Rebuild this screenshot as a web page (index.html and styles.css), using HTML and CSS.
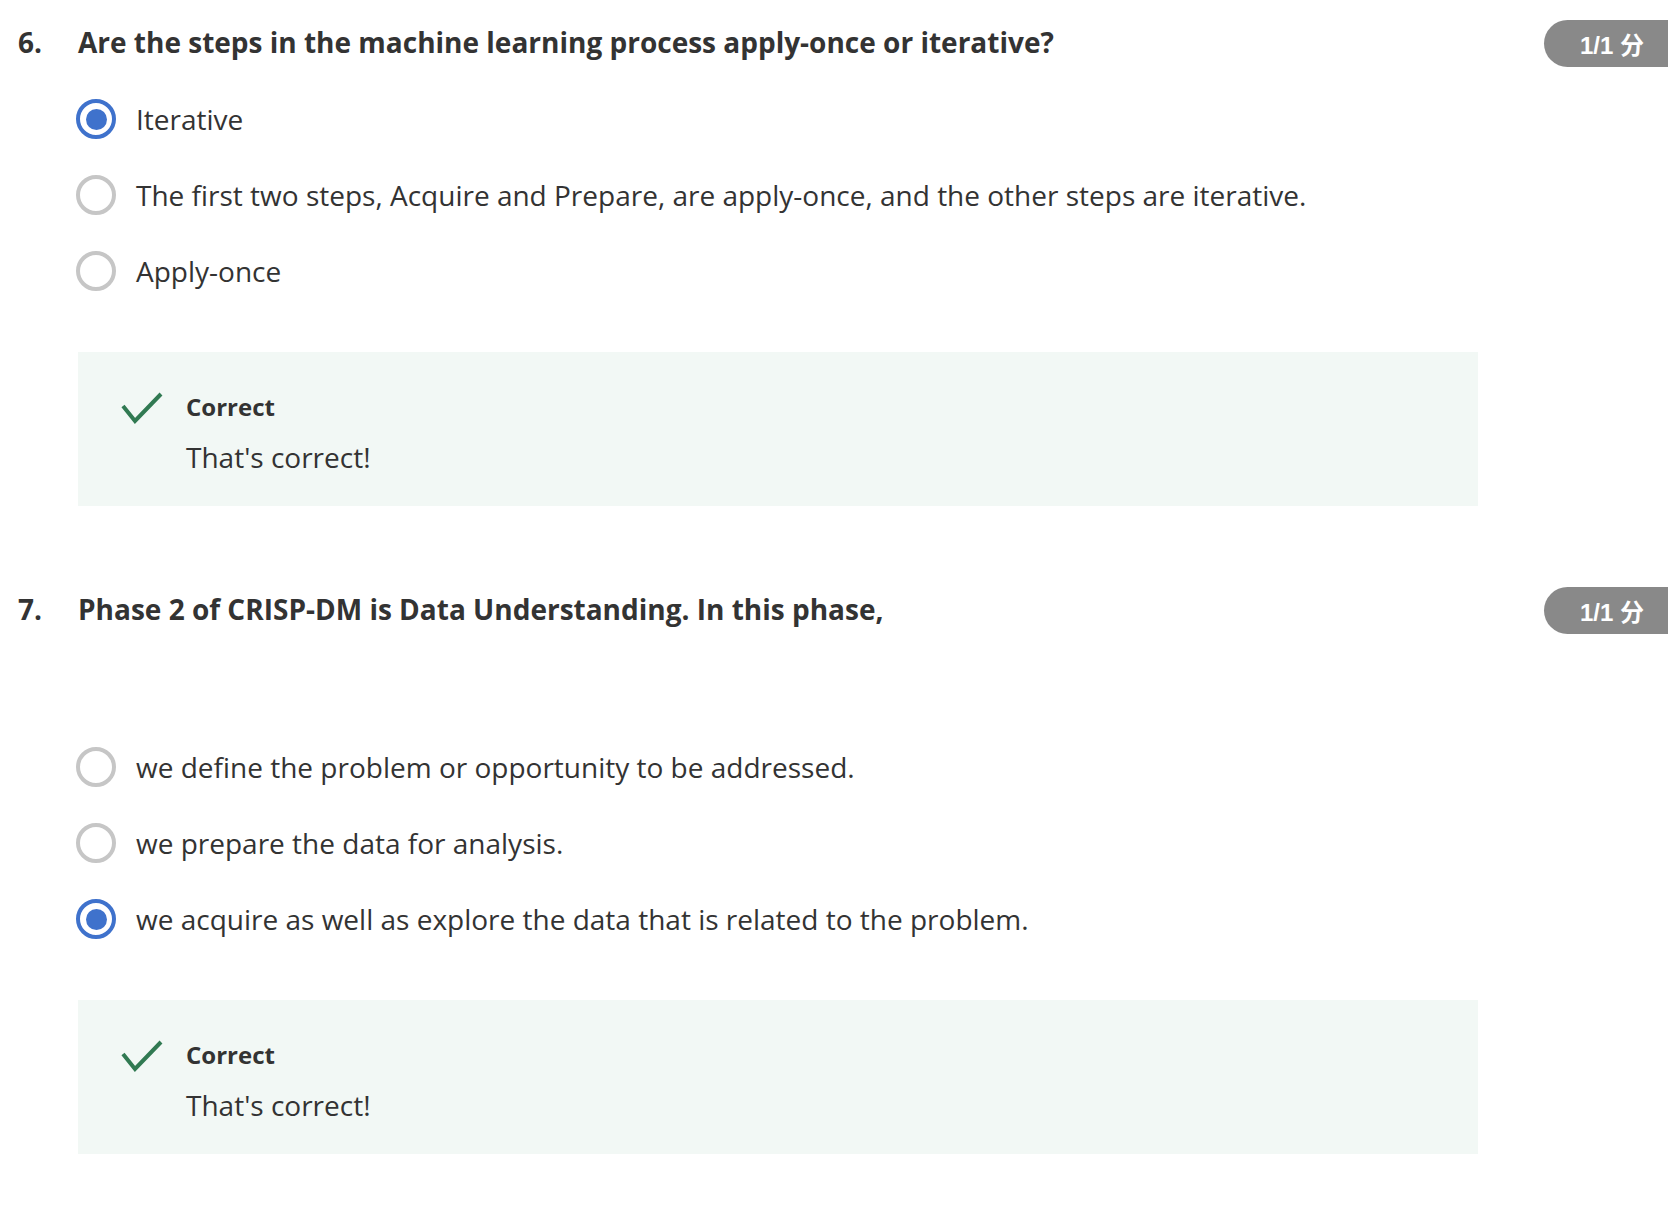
FILE: index.html
```html
<!DOCTYPE html>
<html lang="en">
<head>
<meta charset="utf-8">
<title>Quiz</title>
<link rel="stylesheet" href="styles.css">
</head>
<body>
<div class="quiz">
  <section class="question">
    <div class="q-head">
      <span class="q-num">6.</span>
      <h3 class="q-title">Are the steps in the machine learning process apply-once or iterative?</h3>
      <span class="badge">1/1 分</span>
    </div>
    <div class="options">
      <div class="opt"><span class="radio checked"></span><span class="opt-text">Iterative</span></div>
      <div class="opt"><span class="radio"></span><span class="opt-text">The first two steps, Acquire and Prepare, are apply-once, and the other steps are iterative.</span></div>
      <div class="opt"><span class="radio"></span><span class="opt-text">Apply-once</span></div>
    </div>
    <div class="feedback">
      <svg class="check" viewBox="0 0 42 32" width="42" height="32" aria-hidden="true"><path d="M2 14 L14 29 L40 2" fill="none" stroke="#317a52" stroke-width="4"/></svg>
      <div class="fb-body">
        <div class="fb-title">Correct</div>
        <div class="fb-text">That's correct!</div>
      </div>
    </div>
  </section>

  <section class="question">
    <div class="q-head">
      <span class="q-num">7.</span>
      <h3 class="q-title">Phase 2 of CRISP-DM is Data Understanding. In this phase,</h3>
      <span class="badge">1/1 分</span>
    </div>
    <div class="options options-spaced">
      <div class="opt"><span class="radio"></span><span class="opt-text">we define the problem or opportunity to be addressed.</span></div>
      <div class="opt"><span class="radio"></span><span class="opt-text">we prepare the data for analysis.</span></div>
      <div class="opt"><span class="radio checked"></span><span class="opt-text">we acquire as well as explore the data that is related to the problem.</span></div>
    </div>
    <div class="feedback">
      <svg class="check" viewBox="0 0 42 32" width="42" height="32" aria-hidden="true"><path d="M2 14 L14 29 L40 2" fill="none" stroke="#317a52" stroke-width="4"/></svg>
      <div class="fb-body">
        <div class="fb-title">Correct</div>
        <div class="fb-text">That's correct!</div>
      </div>
    </div>
  </section>
</div>
</body>
</html>
```
FILE: styles.css
```css
html, body {
  margin: 0;
  padding: 0;
  background: #ffffff;
}
body {
  font-family: "Open Sans", "Noto Sans", sans-serif;
  color: #333333;
  overflow-x: hidden;
}
.quiz {
  display: flex;
  flex-direction: column;
}
.question + .question {
  margin-top: 81px;
}
.question:first-child {
  padding-top: 20px;
}
.q-head {
  display: flex;
  align-items: center;
  height: 47px;
  padding-left: 18px;
}
.q-num {
  width: 60px;
  font-size: 28px;
  font-weight: 700;
  line-height: 38px;
  margin-top: -4px;
}
.q-title {
  margin: -4px 0 0 0;
  font-size: 28px;
  font-weight: 700;
  line-height: 38px;
  flex: 1;
}
.badge {
  height: 47px;
  box-sizing: border-box;
  padding-left: 36px;
  width: 124px;
  border-radius: 24px 0 0 24px;
  background: #898989;
  color: #ffffff;
  font-family: "Liberation Sans", "Noto Sans CJK SC", sans-serif;
  font-weight: 700;
  font-size: 24px;
  display: flex;
  align-items: center;
  white-space: nowrap;
}
.options {
  margin-top: 14px;
  padding-left: 76px;
  display: flex;
  flex-direction: column;
}
.options-spaced {
  margin-top: 95px;
}
.opt {
  height: 76px;
  display: flex;
  align-items: center;
  gap: 20px;
}
.radio {
  width: 40px;
  height: 40px;
  box-sizing: border-box;
  border-radius: 50%;
  border: 4px solid #c6c6c6;
  flex: none;
  display: flex;
  align-items: center;
  justify-content: center;
}
.radio.checked {
  border-color: #3f72cc;
}
.radio.checked::after {
  content: "";
  width: 21px;
  height: 21px;
  border-radius: 50%;
  background: #3f72cc;
}
.opt-text {
  font-size: 28px;
  line-height: 40px;
}
.feedback {
  margin-top: 43px;
  margin-left: 78px;
  width: 1400px;
  box-sizing: border-box;
  background: #f2f8f5;
  padding: 40px 0 29px 43px;
  display: flex;
  gap: 23px;
}
.check {
  flex: none;
}
.fb-title {
  font-size: 24px;
  font-weight: 700;
  line-height: 30px;
  margin-bottom: 15px;
}
.fb-text {
  font-size: 28px;
  line-height: 40px;
}
```
